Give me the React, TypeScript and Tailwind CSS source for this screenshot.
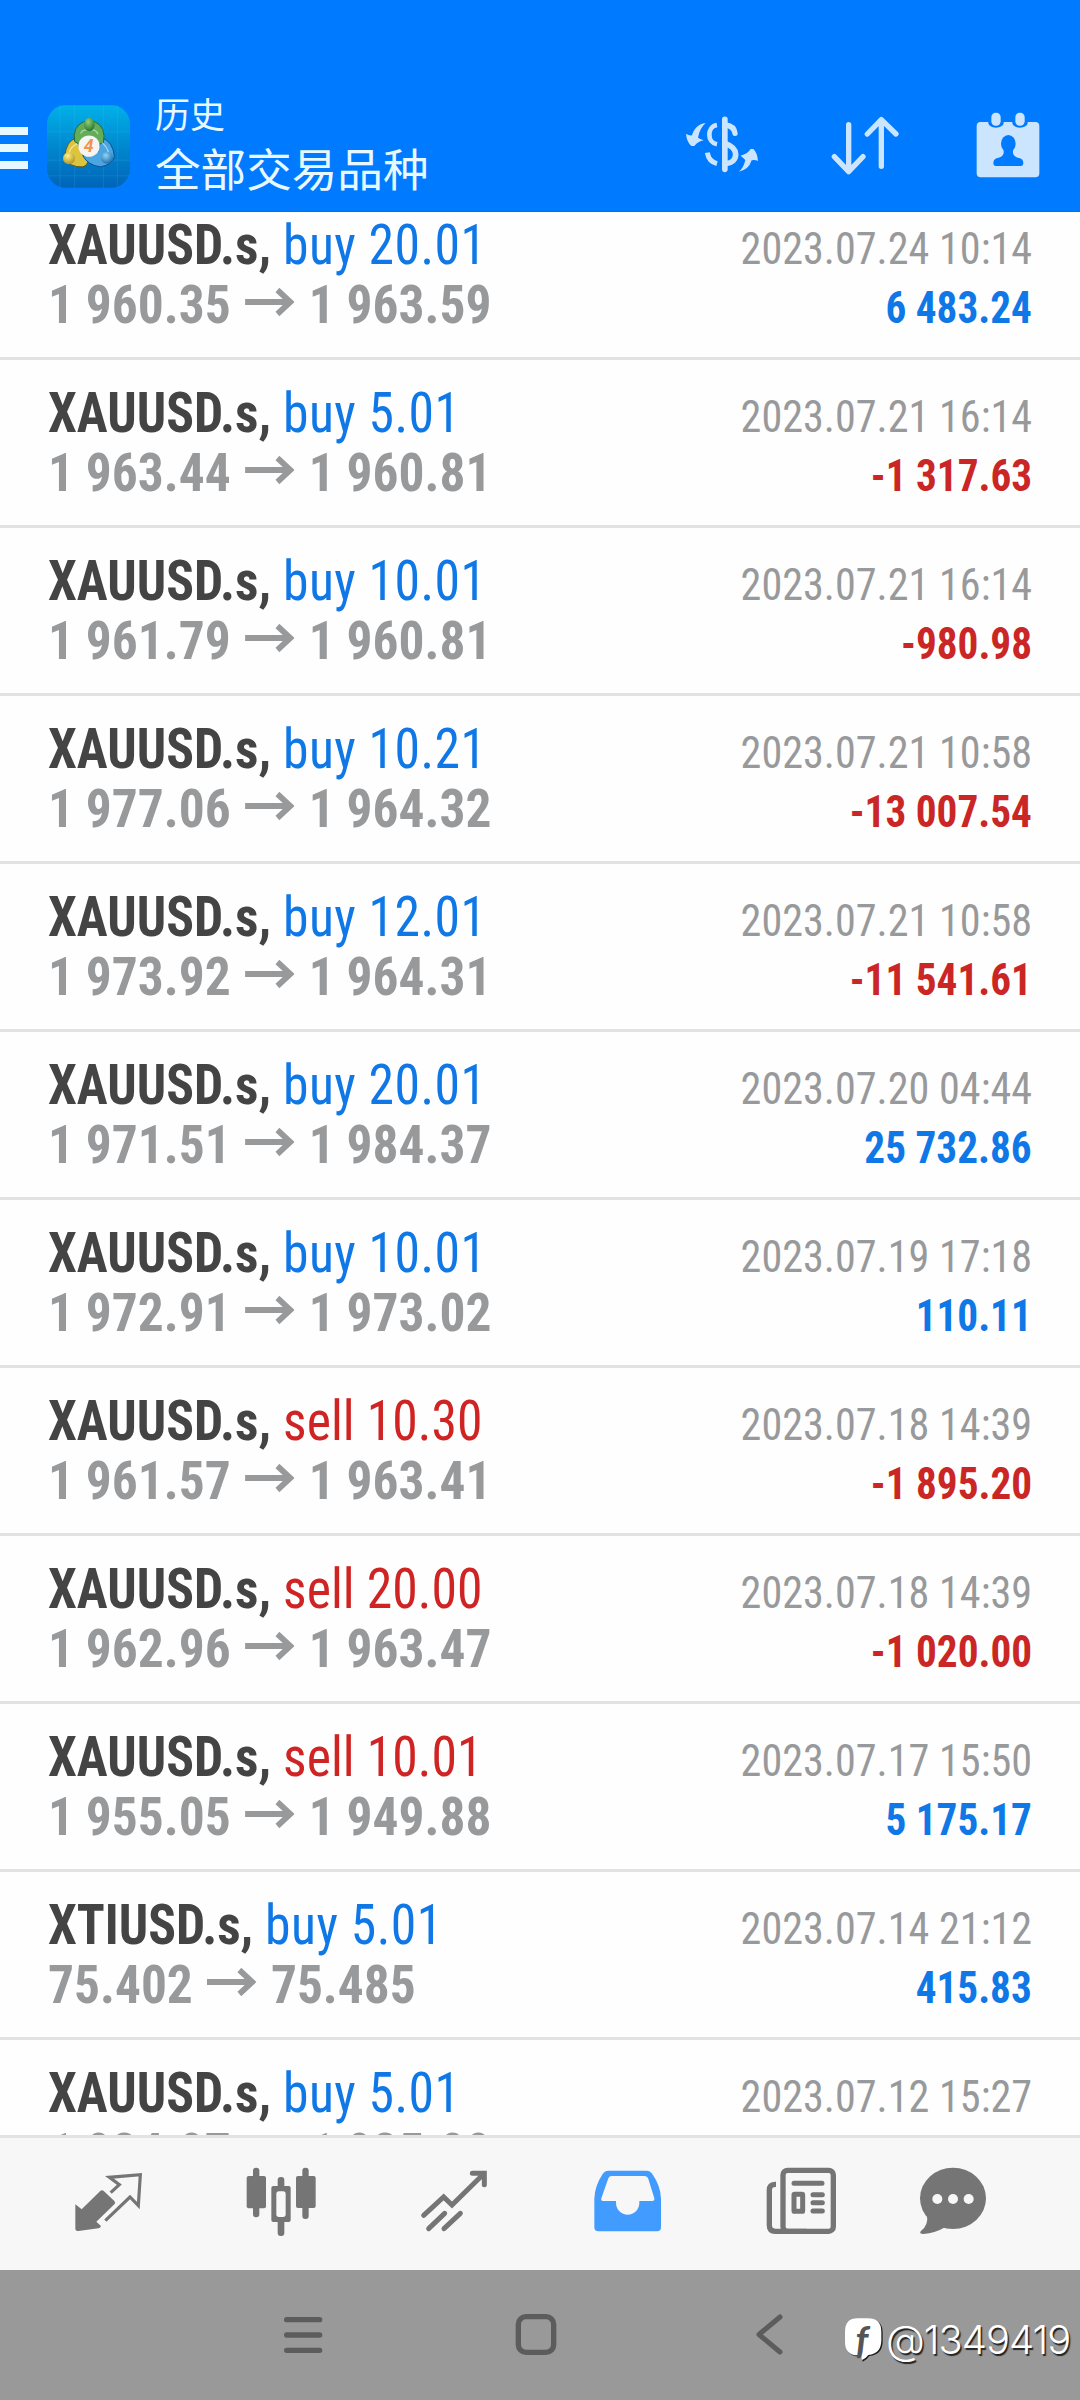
interface Deal {
  symbol: string;
  side: 'buy' | 'sell';
  volume: string;
  open: string;
  close: string;
  time: string;
  profit?: string;
}

const deals: Deal[] = [
  { symbol: 'XAUUSD.s', side: 'buy', volume: '20.01', open: '1 960.35', close: '1 963.59', time: '2023.07.24 10:14', profit: '6 483.24' },
  { symbol: 'XAUUSD.s', side: 'buy', volume: '5.01', open: '1 963.44', close: '1 960.81', time: '2023.07.21 16:14', profit: '-1 317.63' },
  { symbol: 'XAUUSD.s', side: 'buy', volume: '10.01', open: '1 961.79', close: '1 960.81', time: '2023.07.21 16:14', profit: '-980.98' },
  { symbol: 'XAUUSD.s', side: 'buy', volume: '10.21', open: '1 977.06', close: '1 964.32', time: '2023.07.21 10:58', profit: '-13 007.54' },
  { symbol: 'XAUUSD.s', side: 'buy', volume: '12.01', open: '1 973.92', close: '1 964.31', time: '2023.07.21 10:58', profit: '-11 541.61' },
  { symbol: 'XAUUSD.s', side: 'buy', volume: '20.01', open: '1 971.51', close: '1 984.37', time: '2023.07.20 04:44', profit: '25 732.86' },
  { symbol: 'XAUUSD.s', side: 'buy', volume: '10.01', open: '1 972.91', close: '1 973.02', time: '2023.07.19 17:18', profit: '110.11' },
  { symbol: 'XAUUSD.s', side: 'sell', volume: '10.30', open: '1 961.57', close: '1 963.41', time: '2023.07.18 14:39', profit: '-1 895.20' },
  { symbol: 'XAUUSD.s', side: 'sell', volume: '20.00', open: '1 962.96', close: '1 963.47', time: '2023.07.18 14:39', profit: '-1 020.00' },
  { symbol: 'XAUUSD.s', side: 'sell', volume: '10.01', open: '1 955.05', close: '1 949.88', time: '2023.07.17 15:50', profit: '5 175.17' },
  { symbol: 'XTIUSD.s', side: 'buy', volume: '5.01', open: '75.402', close: '75.485', time: '2023.07.14 21:12', profit: '415.83' },
  { symbol: 'XAUUSD.s', side: 'buy', volume: '5.01', open: '1 934.97', close: '1 935.09', time: '2023.07.12 15:27' },
];

function AppLogo() {
  return (
    <svg viewBox="139 75 249 248" className="ml-[19px] h-[83px] w-[83px] shrink-0">
      <defs>
        <linearGradient id="tile" x1="0" y1="0" x2="0" y2="1">
          <stop offset="0" stopColor="#00b1e8" />
          <stop offset="0.5" stopColor="#0088cf" />
          <stop offset="1" stopColor="#0064b8" />
        </linearGradient>
        <radialGradient id="greenBall" cx="0.4" cy="0.3" r="0.8">
          <stop offset="0" stopColor="#8fd07a" />
          <stop offset="1" stopColor="#1d6a24" />
        </radialGradient>
        <radialGradient id="yellowBall" cx="0.4" cy="0.3" r="0.8">
          <stop offset="0" stopColor="#fff08a" />
          <stop offset="1" stopColor="#a98a12" />
        </radialGradient>
        <radialGradient id="blueBall" cx="0.4" cy="0.3" r="0.8">
          <stop offset="0" stopColor="#8fd4f7" />
          <stop offset="1" stopColor="#0d5fa5" />
        </radialGradient>
      </defs>
      <rect x="139" y="75" width="249" height="248" rx="56" fill="url(#tile)" />
      <path d="M139 155H388M139 240H388M139 287H388M178 75V323M222 75V323M308 75V323M350 75V323" stroke="#5cc4f0" strokeOpacity="0.25" strokeWidth="2" />
      {/* Three linked figures */}
      <path d="M228 174Q196 180 192 232Q206 262 246 260Q262 256 262 238L240 216Z" fill="#dcc53c" stroke="#5f5a20" strokeWidth="3" />
      <path d="M302 172Q338 184 341 230Q334 254 300 260Q262 256 246 226L292 216Z" fill="#4aa5e0" stroke="#0d4f8e" strokeWidth="3" />
      <path d="M222 184Q214 140 250 124H282Q318 142 308 188L288 194H240Z" fill="#62ad58" stroke="#2c6a35" strokeWidth="3" />
      <path d="M204 224Q208 200 228 192M324 220Q320 200 304 188M240 160Q246 146 266 150Q286 146 292 162" fill="none" stroke="#ffffff" strokeOpacity="0.5" strokeWidth="4" />
      <ellipse cx="266" cy="133" rx="16" ry="20" fill="url(#greenBall)" />
      <circle cx="205" cy="234" r="18" fill="url(#yellowBall)" />
      <circle cx="319" cy="233" r="18" fill="url(#blueBall)" />
      <circle cx="265" cy="198" r="32" fill="#f6f4f2" />
      <text x="264" y="217" textAnchor="middle" fontSize="53" fontWeight="700" fill="#f0954a" className="font-['Roboto',sans-serif] italic">
        4
      </text>
    </svg>
  );
}

function Header() {
  return (
    <header className="flex h-[212px] shrink-0 items-center bg-[#007aff] pt-[80px] pr-9 shadow-[inset_0_-1px_0_#0b6fd8]">
      <div className="mt-[3px] flex w-7 shrink-0 flex-col gap-[9px]">
        <span className="h-2 bg-[#e8f8ff]" />
        <span className="h-2 bg-[#e8f8ff]" />
        <span className="h-2 bg-[#e8f8ff]" />
      </div>
      <AppLogo />
      <div className="mb-[12px] ml-[25px] font-['Noto_Sans_CJK_SC',sans-serif] text-[#e8f8ff]">
        <div className="text-[35px] leading-[54px]">历史</div>
        <div className="text-[45.6px] leading-[54px]">全部交易品种</div>
      </div>
      <div className="ml-auto flex gap-[71px] text-[#cce5ff]">
        <svg viewBox="78 60 216 216" className="h-[72px] w-[72px]" fill="none" stroke="currentColor">
          <path d="M194.500 88V238" strokeWidth="17" strokeLinecap="round" />
          <path d="M171 105C154 108 148 122 148 134C148 148 156 160 171 163" strokeWidth="14" />
          <path d="M142 188C145 206 155 217 171 221" strokeWidth="15" />
          <path d="M198 105C214 107 223 116 225 130" strokeWidth="16" strokeLinecap="round" />
          <path d="M195 160C215 167 227 178 227 193C227 210 214 220 198 221" strokeWidth="17" />
          <path d="M137 99C116 101 101 116 96 136Q86 137 78 131Q80 155 94 168L103 168Q114 154 131 151Q120 147 114 143Q118 116 137 99Z" fill="currentColor" stroke="none" />
          <path d="M236 245Q250 236 256 210Q250 204 242 197Q262 192 272 177L280 177Q292 188 294 213Q285 208 275 211Q266 240 236 245Z" fill="currentColor" stroke="none" />
        </svg>
        <svg viewBox="507 60 216 216" className="h-[72px] w-[72px]" fill="none" stroke="currentColor" strokeWidth="16" strokeLinecap="round" strokeLinejoin="round">
          <path d="M566 104V244M523 200L566 245L609 200" />
          <path d="M664 229V90M622 132L664 89L708 132" />
        </svg>
        <svg viewBox="936 60 216 216" className="h-[72px] w-[72px]" fill="currentColor">
          <path d="M962 96H985V99A23 14 0 0 0 1031 99V96H1057V99A23 14 0 0 0 1103 99V96H1126Q1138 96 1138 108V250Q1138 262 1126 262H962Q950 262 950 250V108Q950 96 962 96Z" />
          <rect x="994" y="68" width="28" height="39" rx="13" />
          <rect x="1066" y="68" width="28" height="39" rx="13" />
          <g fill="#007aff">
            <ellipse cx="1045" cy="161" rx="22" ry="26" />
            <path d="M1031 175H1059V190Q1062 202 1080 205Q1090 209 1090 219Q1090 228 1082 228H1008Q1000 228 1000 219Q1000 209 1010 205Q1028 202 1031 190Z" />
          </g>
        </svg>
      </div>
    </header>
  );
}

function DealRow({ deal }: { deal: Deal }) {
  return (
    <div className="h-[168px] border-b-[3px] border-[#e3e3e3] px-12 pt-6 whitespace-nowrap">
      <div className="flex h-[59px] items-baseline justify-between leading-[59px]">
        <div className="origin-left scale-x-[0.938] text-[55px]">
          <span className="font-bold text-[#444444]">{deal.symbol}, </span>
          <span className={deal.side === 'buy' ? 'tracking-[0.5px] text-[#0f78e6]' : 'tracking-[0.1px] text-[#d02424]'}>
            {deal.side} {deal.volume}
          </span>
        </div>
        <div className="origin-right scale-x-[0.937] text-[45px] text-[#98999b]">{deal.time}</div>
      </div>
      <div className="flex h-[59px] items-baseline justify-between leading-[59px]">
        <div className="origin-left scale-x-[0.952] text-[54px] font-bold text-[#98999b]">
          {deal.open}
          <svg viewBox="0 0 52 28" className="mr-[15px] ml-[15px] inline h-7 w-[52px] align-[7px]" fill="none" stroke="currentColor" strokeWidth="6">
            <path d="M0 14H48M34 2L47.500 14L34 26" />
          </svg>
          {deal.close}
        </div>
        {deal.profit && (
          <div className={`origin-right scale-x-[0.916] text-[45px] font-bold ${deal.profit.startsWith('-') ? 'text-[#cb2626]' : 'text-[#0f78e6]'}`}>
            {deal.profit}
          </div>
        )}
      </div>
    </div>
  );
}

function TabBar() {
  return (
    <nav className="flex h-[135px] shrink-0 items-center border-t-[3px] border-[#e3e3e3] bg-[#f7f7f7] pl-[22px] text-[#757575]">
      {/* Quotes */}
      <div className="flex w-[173px] justify-center">
        <svg viewBox="96 54 219 216" className="h-[72px] w-[73px] overflow-visible">
          <path d="M106 163L125 178L180 124Q186 118 192 124L223 153Q228 158 223 163L169 215L183 228Q181 234 176 235L115 243Q106 244 106 236Z" fill="currentColor" />
          <path d="M212 128L238 104L208 82L301 74L295 167L270 141L196 212" fill="none" stroke="currentColor" strokeWidth="9.500" />
        </svg>
      </div>
      {/* Charts */}
      <div className="flex w-[173px] justify-center">
        <svg viewBox="615 54 219 216" className="h-[72px] w-[73px] overflow-visible" fill="currentColor">
          <rect x="639" y="53" width="19" height="149" rx="9" />
          <rect x="620" y="78" width="58" height="97" rx="6" />
          <rect x="713" y="81" width="20" height="177" rx="9" />
          <rect x="694" y="108" width="58" height="108" rx="6" />
          <rect x="709" y="124" width="28" height="77" rx="8" fill="#f7f7f7" />
          <rect x="787" y="53" width="19" height="154" rx="9" />
          <rect x="768" y="78" width="59" height="96" rx="6" />
        </svg>
      </div>
      {/* Trade */}
      <div className="flex w-[173px] justify-center">
        <svg viewBox="54 54 219 216" className="h-[72px] w-[73px] overflow-visible" fill="none" stroke="currentColor" strokeWidth="15" strokeLinecap="round">
          <path d="M71 196L131 141L156 165L250 73" />
          <path d="M217 70H253V104" />
          <path d="M86 236L134 190M132 236L181 190" />
        </svg>
      </div>
      {/* History */}
      <div className="flex w-[173px] justify-center text-[#429bff]">
        <svg viewBox="573 54 219 216" className="h-[72px] w-[73px] overflow-visible" fill="currentColor">
          <path
            fillRule="evenodd"
            d="M626 62H740Q750 62 757 72Q782 108 783 146V232Q783 244 771 244H595Q583 244 583 232V146Q584 108 608 72Q614 62 626 62ZM634 78Q628 78 625 85L604 145Q602 153 609 153H648V159A35 35 0 0 0 718 159V153H757Q764 153 763 145L745 87Q742 78 733 78Z"
          />
        </svg>
      </div>
      {/* News */}
      <div className="flex w-[173px] justify-center">
        <svg viewBox="72 54 219 216" className="h-[72px] w-[73px] overflow-visible" fill="none" stroke="currentColor" strokeWidth="16">
          <rect x="129" y="61" width="151" height="183" rx="14" />
          <path d="M108 103H105Q88 104 88 120V226Q88 244 106 244H200" />
          <path d="M162 100H246M219 134H247M219 158H247M219 183H247" strokeLinecap="round" strokeWidth="15" />
          <rect x="162" y="133" width="26" height="51" rx="2" strokeWidth="15" />
        </svg>
      </div>
      {/* Messages */}
      <div className="flex w-[131px] justify-center">
        <svg viewBox="528 54 219 216" className="h-[72px] w-[73px] overflow-visible" fill="currentColor">
          <ellipse cx="639" cy="145" rx="99" ry="92" />
          <path d="M561 195Q566 226 542 244Q537 252 550 252Q585 250 615 232Z" />
          <g fill="#f7f7f7">
            <circle cx="592" cy="147" r="15" />
            <circle cx="639" cy="147" r="15" />
            <circle cx="686" cy="147" r="15" />
          </g>
        </svg>
      </div>
    </nav>
  );
}

function SystemBar() {
  return (
    <footer className="relative flex h-[130px] shrink-0 items-center gap-[185px] bg-[#999999] pl-[279px] text-[#5c5c5c]">
      <svg viewBox="117 123 144 144" className="h-12 w-12" stroke="currentColor" strokeWidth="16" strokeLinecap="round">
        <path d="M140 149H239M140 195H239M140 241H239" />
      </svg>
      <svg viewBox="816 123 144 144" className="h-12 w-12" fill="none" stroke="currentColor" strokeWidth="16">
        <rect x="835" y="140" width="106" height="107" rx="23" />
      </svg>
      <svg viewBox="0 0 48 48" className="h-12 w-12" fill="none" stroke="currentColor" strokeWidth="5" strokeLinecap="round" strokeLinejoin="round">
        <path d="M35 6L14 23.500L35 41" />
      </svg>
      {/* Watermark */}
      <div className="absolute top-[46px] left-[844px] flex items-center text-white">
        <svg viewBox="192 120 120 144" className="h-12 w-10 overflow-visible">
          <path d="M236 130H266Q308 130 308 170V196Q308 236 268 240Q262 250 248 257L245 241H236Q198 240 198 200V170Q198 130 236 130Z" fill="#1a1a1a" />
          <path d="M233 127H263Q304 127 304 167V193Q304 233 265 237Q258 247 246 252L243 238H233Q195 237 195 197V167Q195 127 233 127Z" fill="#ffffff" />
          <text x="246" y="234" textAnchor="middle" fontSize="116" fontWeight="700" fill="#555555" className="font-['Lato',sans-serif] italic">
            f
          </text>
        </svg>
        <span className="ml-[2px] font-['Inter',sans-serif] text-[40px] leading-[48px] font-light tracking-[-1px] [text-shadow:1.5px_1.5px_1px_#222]">@1349419</span>
      </div>
    </footer>
  );
}

export default function App() {
  return (
    <div className="flex h-[2400px] w-[1080px] flex-col overflow-hidden bg-white font-['Roboto_Condensed','Roboto',sans-serif]">
      <Header />
      <main className="min-h-0 flex-1 overflow-hidden bg-[#fefefe] [font-stretch:75%]">
        <div className="-mt-5">
          {deals.map((deal, i) => (
            <DealRow key={i} deal={deal} />
          ))}
        </div>
      </main>
      <TabBar />
      <SystemBar />
    </div>
  );
}
